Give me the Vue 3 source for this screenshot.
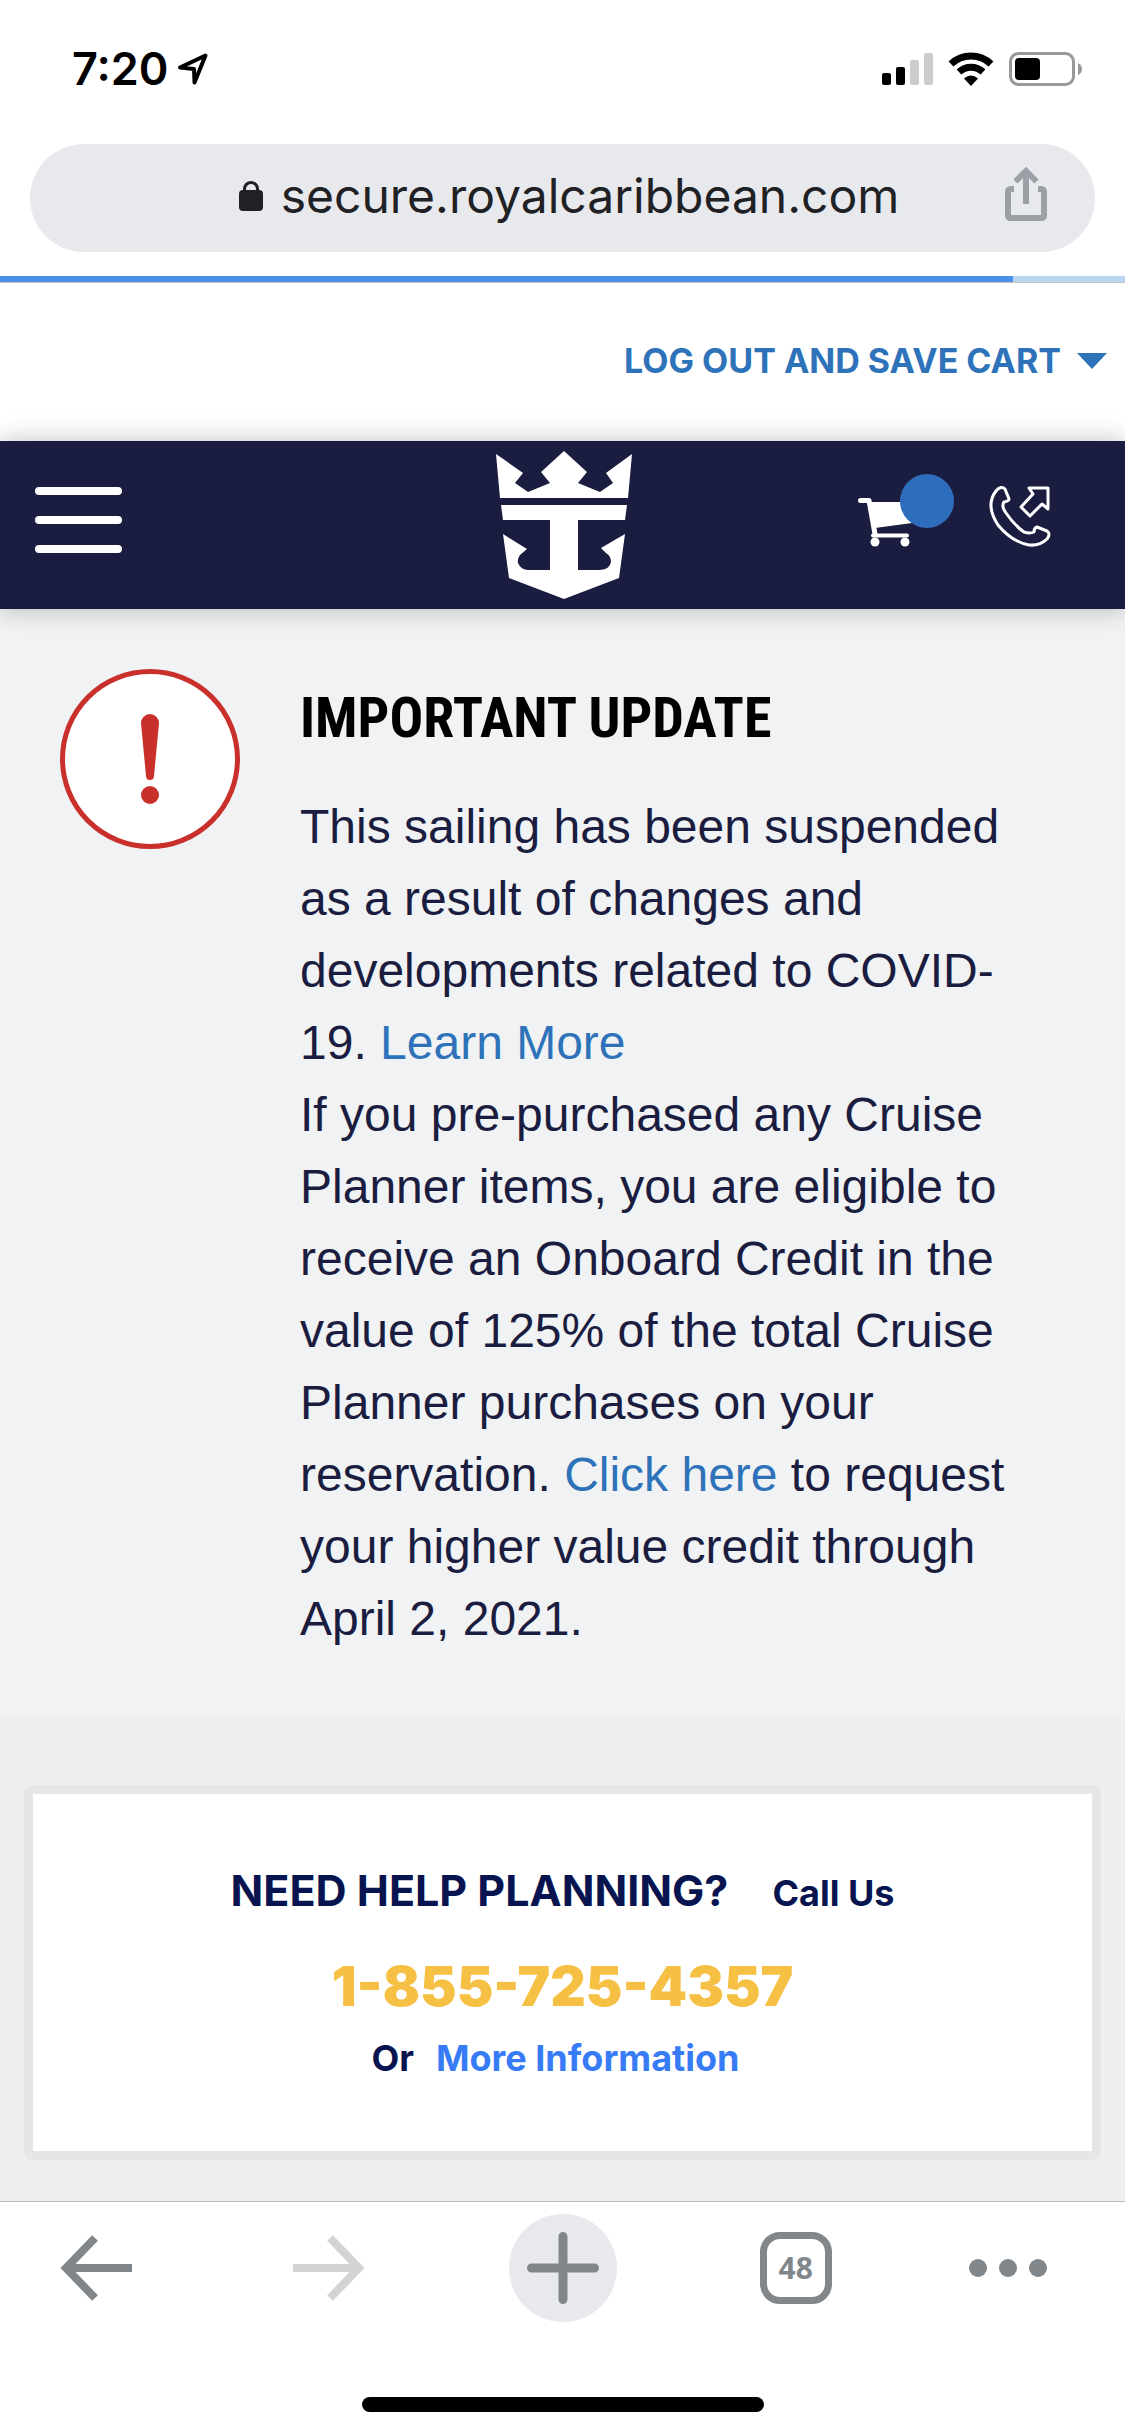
<script setup>
const signal = [
  { x: 0, y: 20, h: 12, on: true },
  { x: 14, y: 14, h: 18, on: true },
  { x: 28, y: 7, h: 25, on: false },
  { x: 42, y: 0, h: 32, on: false },
]
const progress = 90
</script>

<template>
  <div class="screen">
    <header class="status">
      <div class="clock">
        <span>7:20</span>
        <svg width="32" height="34" viewBox="0 0 32 34" aria-hidden="true">
          <path d="M28.500 3.500 3 15.500 L17 17 L17.500 30.500 Z" fill="none" stroke="#000" stroke-width="4" stroke-linejoin="round" />
        </svg>
      </div>
      <div class="indicators">
        <svg width="51" height="32" viewBox="0 0 51 32" aria-hidden="true">
          <rect v-for="b in signal" :key="b.x" :x="b.x" :y="b.y" width="9" :height="b.h" rx="2" :fill="b.on ? '#000' : '#ccc'" />
        </svg>
        <svg width="46" height="34" viewBox="0 0 46 34" aria-hidden="true">
          <path d="M3 12 A29 29 0 0 1 43 12" fill="none" stroke="#000" stroke-width="7" />
          <path d="M11 20 A17.500 17.500 0 0 1 35 20" fill="none" stroke="#000" stroke-width="7" />
          <path d="M16 26.500 Q23 20.500 30 26.500 L23 34 Z" />
        </svg>
        <svg width="74" height="34" viewBox="0 0 74 34" aria-hidden="true">
          <rect x="1.500" y="1.500" width="63" height="31" rx="8" fill="none" stroke="#999" stroke-width="3" />
          <rect x="6" y="6" width="25" height="22" rx="4" />
          <path d="M69 11 Q73 13 73 17 Q73 21 69 23 Z" fill="#999" />
        </svg>
      </div>
    </header>

    <div class="address">
      <div class="url">
        <svg width="24" height="30" viewBox="0 0 24 30" aria-hidden="true">
          <path d="M5.500 12 V8 a6.500 6.500 0 0 1 13 0 V12" fill="none" stroke="#202124" stroke-width="3" />
          <rect y="9" width="24" height="21" rx="4" fill="#202124" />
        </svg>
        <span>secure.royalcaribbean.com</span>
      </div>
      <button class="share" type="button" aria-label="Share">
        <svg width="42" height="54" viewBox="0 0 42 54">
          <path d="M9 22 H6 Q3 22 3 25 V48 Q3 51 6 51 H36 Q39 51 39 48 V25 Q39 22 36 22 H33" fill="none" stroke="#9aa0a6" stroke-width="6" />
          <path d="M21 37 V5 M10.500 14.500 21 4 31.500 14.500" fill="none" stroke="#9aa0a6" stroke-width="6" />
        </svg>
      </button>
    </div>
    <div class="progress"><div class="done" :style="{ width: progress + '%' }"></div></div>

    <div class="account">
      <button type="button">
        LOG OUT AND SAVE CART
        <svg width="30" height="16" viewBox="0 0 30 16" aria-hidden="true"><path d="M0 0 H30 L15 16 Z" fill="#2e73b9" /></svg>
      </button>
    </div>

    <nav class="brandbar">
      <button class="menu" type="button" aria-label="Menu"><i></i><i></i><i></i></button>
      <a class="logo" href="#" aria-label="Royal Caribbean">
        <svg width="136" height="148" viewBox="0 0 136 148">
          <g fill="#fff">
            <path d="M0 3 27 22 19 32 32 41 54 32 45 21 68 0 91 21 82 32 104 41 117 32 110 22 136 3 132 47 H4 Z" />
            <path d="M5 54 H131 L129 69 H82 V119 H104 Q114 118 115 111 Q115 105 110 102 L105 97 129 83 123 127 68 148 13 127 7 83 31 98 24 104 Q21 108 22 112 Q25 119 32 119 H54 V69 H7 Z" />
          </g>
        </svg>
      </a>
      <div class="actions">
        <button class="cart" type="button" aria-label="Cart">
          <svg width="54" height="48" viewBox="0 1 54 48">
            <path d="M2.500 3.500 H11 L17 37" fill="none" stroke="#fff" stroke-width="5" stroke-linecap="round" stroke-linejoin="round" />
            <path d="M12 5 H54 V26 L17 31 Z" fill="#fff" />
            <path d="M15 38.500 H49" stroke="#fff" stroke-width="4" stroke-linecap="round" />
            <circle cx="17" cy="45" r="4.500" fill="#fff" /><circle cx="47" cy="45" r="4.500" fill="#fff" />
          </svg>
          <span class="badge"></span>
        </button>
        <a class="phone" href="tel:18557254357" aria-label="Call">
          <svg width="60" height="60" viewBox="0 0 60 60" fill="none" stroke="#fff" stroke-width="3" stroke-linejoin="round">
            <path d="M6 5 Q11 -1 15 3 L19 13 Q19 15 14 16 Q11 20 16 27 Q25 40 34 46 Q40 48 44 46 Q44 42 47 41 L57 45 Q61 48 57 53 Q50 60 39 59 Q22 56 8 39 Q-5 19 6 5 Z" />
            <path d="M39 2 H58 V23 L52 18 40 30 31 21 43 8 Z" />
          </svg>
        </a>
      </div>
    </nav>

    <main>
      <section class="notice">
        <svg width="180" height="180" viewBox="0 0 180 180" aria-hidden="true">
          <circle cx="90" cy="90" r="87.500" fill="#fff" stroke="#c9302c" stroke-width="5" />
          <path d="M81 54 a9 9 0 0 1 18 0 L94 107 a4 4 0 0 1 -8 0 Z" fill="#c9302c" />
          <circle cx="90" cy="126" r="9" fill="#c9302c" />
        </svg>
        <div class="message">
          <h1>IMPORTANT UPDATE</h1>
          <p>This sailing has been suspended as a result of changes and developments related to COVID-19. <a href="#">Learn More</a></p>
          <p>If you pre-purchased any Cruise Planner items, you are eligible to receive an Onboard Credit in the value of 125% of the total Cruise Planner purchases on your reservation. <a href="#">Click here</a> to request your higher value credit through April 2, 2021.</p>
        </div>
      </section>
      <section class="help">
        <div class="card">
          <div class="row head"><h2>NEED HELP PLANNING?</h2><span>Call Us</span></div>
          <a class="number" href="tel:18557254357">1-855-725-4357</a>
          <div class="row more"><span>Or</span><a href="#">More Information</a></div>
        </div>
      </section>
    </main>

    <footer class="toolbar">
      <div class="tools">
        <button type="button" aria-label="Back">
          <svg width="72" height="66" viewBox="0 0 72 66"><path d="M72 33 H8 M35 3 6 33 35 63" fill="none" stroke="#80868a" stroke-width="8" /></svg>
        </button>
        <button type="button" aria-label="Forward" disabled>
          <svg width="72" height="66" viewBox="0 0 72 66"><path d="M0 33 H64 M37 3 66 33 37 63" fill="none" stroke="#d3d3d3" stroke-width="8" /></svg>
        </button>
        <button class="add" type="button" aria-label="New tab">
          <svg width="72" height="72" viewBox="0 0 72 72"><path d="M4.500 36 H67.500 M36 4.500 V67.500" stroke="#80868a" stroke-width="9" stroke-linecap="round" /></svg>
        </button>
        <button class="tabs" type="button" aria-label="48 open tabs">48</button>
        <button class="overflow" type="button" aria-label="More">
          <svg width="78" height="18" viewBox="0 0 78 18" fill="#80868a"><circle cx="9" cy="9" r="9" /><circle cx="39" cy="9" r="9" /><circle cx="69" cy="9" r="9" /></svg>
        </button>
      </div>
      <div class="home"></div>
    </footer>
  </div>
</template>

<style>
body { background: #fff; }
</style>

<style scoped>
.screen { display: flex; flex-direction: column; min-height: 100vh; background: #fff; font-family: "Liberation Sans", Arial, sans-serif; }
button { margin: 0; padding: 0; border: 0; background: none; font: inherit; color: inherit; }
a { text-decoration: none; }
svg { display: block; flex: none; overflow: visible; }
h1, h2, p { margin: 0; }

.status { display: flex; justify-content: space-between; align-items: center; height: 138px; padding: 0 42px 0 72px; }
.clock { display: flex; align-items: center; gap: 9px; font: 600 45px/52px Inter, sans-serif; }
.indicators { display: flex; align-items: center; gap: 15px; }

.address { display: flex; align-items: center; margin: 6px 30px 24px; height: 108px; border-radius: 54px; background: #e8e9ed; }
.url { flex: 1; display: flex; align-items: center; justify-content: center; gap: 18px; padding: 0 0 4px 114px; font: 400 48px/58px Inter, sans-serif; color: #202124; }
.share { margin: 0 48px 8px 11px; }

.progress { height: 6px; background: #b8d5f2; border-bottom: 1px solid #c4c4c4; }
.done { height: 6px; background: #4a90e8; }

.account { display: flex; justify-content: flex-end; padding: 54px 18px 57px; color: #2e73b9; }
.account button { display: flex; align-items: center; gap: 16px; font: 700 34px/47px Inter, sans-serif; }

.brandbar { position: relative; display: grid; grid-template-columns: 1fr auto 1fr; align-items: center; height: 168px; padding: 0 75px 0 35px; background: #1b1d40; box-shadow: 0 0 24px rgba(0, 0, 0, 0.25); }
.menu { display: flex; flex-direction: column; gap: 21px; width: 87px; margin-bottom: 10px; }
.menu i { height: 8px; border-radius: 4px; background: #fff; }
.logo { margin-left: 42px; }
.actions { display: flex; justify-content: flex-end; align-items: flex-end; gap: 78px; margin-bottom: 18px; }
.cart { position: relative; }
.badge { position: absolute; left: 42px; top: -24px; width: 54px; height: 54px; border-radius: 50%; background: #2e6dbb; }

main { flex: 1; background: #efefef; }
.notice { display: flex; align-items: flex-start; gap: 60px; padding: 60px 100px 62px 60px; background: #f1f2f4; }
.message { flex: 1; min-width: 0; }
h1 { font: 700 56px/72px "Roboto Condensed", Roboto, sans-serif; padding: 13px 0 37px; }
p { font-size: 48px; line-height: 72px; color: #1b1d40; }
p a { color: #2e73b9; }

.help { padding: 68px 24px 41px; }
.card { display: flex; flex-direction: column; align-items: center; border: 9px solid #e6e6e6; border-radius: 9px; background: #fff; padding: 66px 0 63px; font-family: Inter, sans-serif; font-weight: 700; color: #081450; }
.row { display: flex; align-items: baseline; font-size: 36px; line-height: 60px; }
.head { gap: 44px; }
h2 { font-size: 43px; line-height: 60px; }
.number { font-size: 55px; line-height: 84px; font-weight: 900; color: #f6c045; margin-top: 21px; }
.more { gap: 22px; padding-right: 14px; }
.more a { color: #377cf6; }

.toolbar { border-top: 1px solid #bdbdbd; background: #fff; padding: 12px 36px 24px; }
.tools { display: grid; grid-template-columns: repeat(5, 120px); justify-content: space-between; justify-items: center; align-items: center; }
.add { display: grid; place-items: center; width: 108px; height: 108px; border-radius: 50%; background: #e8e9ed; }
.tabs { box-sizing: border-box; width: 72px; height: 72px; border: 7px solid #80868a; border-radius: 20px; font: 700 30px/58px "Open Sans", sans-serif; color: #80868a; }
.overflow { justify-self: start; }
.home { width: 402px; height: 15px; border-radius: 8px; background: #000; margin: 75px auto 0; }
</style>
